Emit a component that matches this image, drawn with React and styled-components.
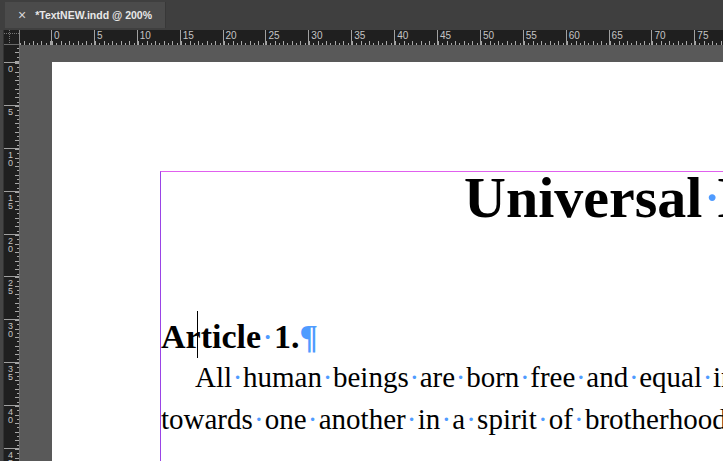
import styled, { createGlobalStyle } from "styled-components";

const H_LABELS = [0, 5, 10, 15, 20, 25, 30, 35, 40, 45, 50, 55, 60, 65, 70, 75, 80];
const V_LABELS = ["0", "5", "10", "15", "20", "25", "30", "35", "40", "45"];
const STEP = 42.9;

function Words({ text, gap }) {
  const words = text.split(" ");
  return words.map((w, i) => (
    <span key={i}>
      {i > 0 && <Space $w={gap}>·</Space>}
      {w}
    </span>
  ));
}

export default function App() {
  return (
    <Root>
      <GlobalStyle />
      <TabBar>
        <Tab>
          <Close>×</Close>
          <TabTitle>*TextNEW.indd @ 200%</TabTitle>
        </Tab>
      </TabBar>

      <RulerRow>
        <Gutter />
        <Corner />
        <HRuler>
          <HSeg $partial style={{ width: 31 }} />
          {H_LABELS.map((n) => (
            <HSeg key={n} style={{ width: STEP }}>
              <HLabel>{n}</HLabel>
            </HSeg>
          ))}
        </HRuler>
      </RulerRow>

      <Workspace>
        <Gutter />
        <VRuler>
          <VSeg $partial style={{ height: 17 }} />
          {V_LABELS.map((n) => (
            <VSeg key={n} style={{ height: STEP }}>
              <VLabel>
                {n.split("").map((d, i) => (
                  <Digit key={i}>{d}</Digit>
                ))}
              </VLabel>
            </VSeg>
          ))}
        </VRuler>
        <Pasteboard>
          <Page>
            <TextFrame>
              <Title>
                <Words text="Universal D" gap={15} />
              </Title>
              <Heading>
                Ar
                <Caret />
                ticle
                <Space $w={13}>·</Space>
                1.<Pilcrow>¶</Pilcrow>
              </Heading>
              <Body>
                <Line $indent>
                  <Words text="All human beings are born free and equal in" gap={11} />
                </Line>
                <Line>
                  <Words text="towards one another in a spirit of brotherhood" gap={12} />
                </Line>
              </Body>
            </TextFrame>
          </Page>
        </Pasteboard>
      </Workspace>
    </Root>
  );
}

const GlobalStyle = createGlobalStyle`
  body {
    margin: 0;
    background: #3c3c3c;
  }
`;

const Root = styled.div`
  width: 723px;
  height: 461px;
  overflow: hidden;
  display: flex;
  flex-direction: column;
  background: #3e3e3e;
  font-family: "Liberation Sans", Arial, sans-serif;
`;

const TabBar = styled.div`
  height: 30px;
  flex: none;
  display: flex;
  align-items: flex-start;
  padding: 2px 0 0 5px;
  box-sizing: border-box;
  background: #3f3f3f;
`;

const Tab = styled.div`
  width: 161px;
  height: 26px;
  display: flex;
  align-items: center;
  gap: 9px;
  padding-left: 13px;
  box-sizing: border-box;
  background: #4b4b4b;
  border-right: 1px solid #383838;
`;

const Close = styled.span`
  color: #d6d6d6;
  font-size: 14px;
  line-height: 1;
`;

const TabTitle = styled.span`
  color: #e8e8e8;
  font-size: 10.5px;
  font-weight: bold;
`;

const RulerRow = styled.div`
  height: 15px;
  flex: none;
  display: flex;
`;

const Gutter = styled.div`
  width: 4px;
  flex: none;
  background: #454545;
  border-right: 1px solid #333;
  box-sizing: border-box;
`;

const Corner = styled.div`
  width: 16px;
  flex: none;
  box-sizing: border-box;
  border-right: 1px solid #8a8a8a;
  border-bottom: 1px solid #6a6a6a;
  background:
    linear-gradient(to right, #777 50%, transparent 50%) 2px 3px / 2px 1px repeat-x,
    linear-gradient(to bottom, #777 50%, transparent 50%) 5px 2px / 1px 2px repeat-y,
    #1f1f1f;
`;

const HRuler = styled.div`
  flex: 1;
  display: flex;
  overflow: hidden;
  background: #1f1f1f;
`;

const HSeg = styled.div`
  flex: none;
  height: 100%;
  box-sizing: border-box;
  border-left: ${(p) => (p.$partial ? "none" : "1px solid #a0a0a0")};
  background-image:
    repeating-linear-gradient(${(p) => (p.$partial ? "to left" : "to right")}, #a8a8a8 0 1px, transparent 1px 4.29px),
    repeating-linear-gradient(${(p) => (p.$partial ? "to left" : "to right")}, #a8a8a8 0 1px, transparent 1px 8.58px);
  background-size: 100% 2px, 100% 4px;
  background-repeat: no-repeat;
  background-position: ${(p) => (p.$partial ? "right bottom" : "left bottom")};
`;

const HLabel = styled.span`
  display: block;
  padding: 1px 0 0 2px;
  color: #c4c4c4;
  font-size: 10px;
  line-height: 10px;
`;

const Workspace = styled.div`
  flex: 1;
  display: flex;
  min-height: 0;
`;

const VRuler = styled.div`
  width: 16px;
  flex: none;
  overflow: hidden;
  box-sizing: border-box;
  border-right: 1px solid #6a6a6a;
  background: #1f1f1f;
`;

const VSeg = styled.div`
  box-sizing: border-box;
  border-top: ${(p) => (p.$partial ? "none" : "1px solid #a0a0a0")};
  background-image:
    repeating-linear-gradient(${(p) => (p.$partial ? "to top" : "to bottom")}, #a8a8a8 0 1px, transparent 1px 4.29px),
    repeating-linear-gradient(${(p) => (p.$partial ? "to top" : "to bottom")}, #a8a8a8 0 1px, transparent 1px 8.58px);
  background-size: 2px 100%, 4px 100%;
  background-repeat: no-repeat;
  background-position: ${(p) => (p.$partial ? "right bottom" : "right top")};
`;

const VLabel = styled.span`
  display: flex;
  flex-direction: column;
  width: 9px;
  padding: 2px 0 0 2px;
  color: #c4c4c4;
  text-align: center;
`;

const Digit = styled.span`
  display: block;
  height: 8px;
  font-size: 9px;
  line-height: 8px;
`;

const Pasteboard = styled.div`
  flex: 1;
  display: flex;
  padding: 17px 0 0 32px;
  background: #595959;
  min-width: 0;
`;

const Page = styled.div`
  flex: 1;
  display: flex;
  padding: 109px 0 0 108px;
  background: #fff;
  min-width: 0;
`;

const TextFrame = styled.div`
  flex: 1;
  border-top: 1px solid #e060ee;
  border-left: 1px solid #9a44e6;
  font-family: "Liberation Serif", "Times New Roman", serif;
  color: #000;
  white-space: nowrap;
  min-width: 0;
`;

const Title = styled.div`
  padding-left: 303px;
  font-size: 58px;
  font-weight: bold;
  line-height: 51px;
`;

const Heading = styled.div`
  margin-top: 94px;
  font-size: 34px;
  font-weight: bold;
  line-height: 39px;
`;

const Caret = styled.span`
  display: inline-block;
  width: 1px;
  height: 47px;
  margin: -6px 3px -2px -4px;
  vertical-align: top;
  background: #000;
`;

const Space = styled.span`
  display: inline-block;
  width: ${(p) => p.$w}px;
  text-align: center;
  color: #4f9bff;
  font-weight: normal;
`;

const Pilcrow = styled.span`
  color: #4f9bff;
`;

const Body = styled.div`
  font-size: 29px;
  line-height: 42px;
`;

const Line = styled.div`
  padding-left: ${(p) => (p.$indent ? "34px" : "0")};
`;
